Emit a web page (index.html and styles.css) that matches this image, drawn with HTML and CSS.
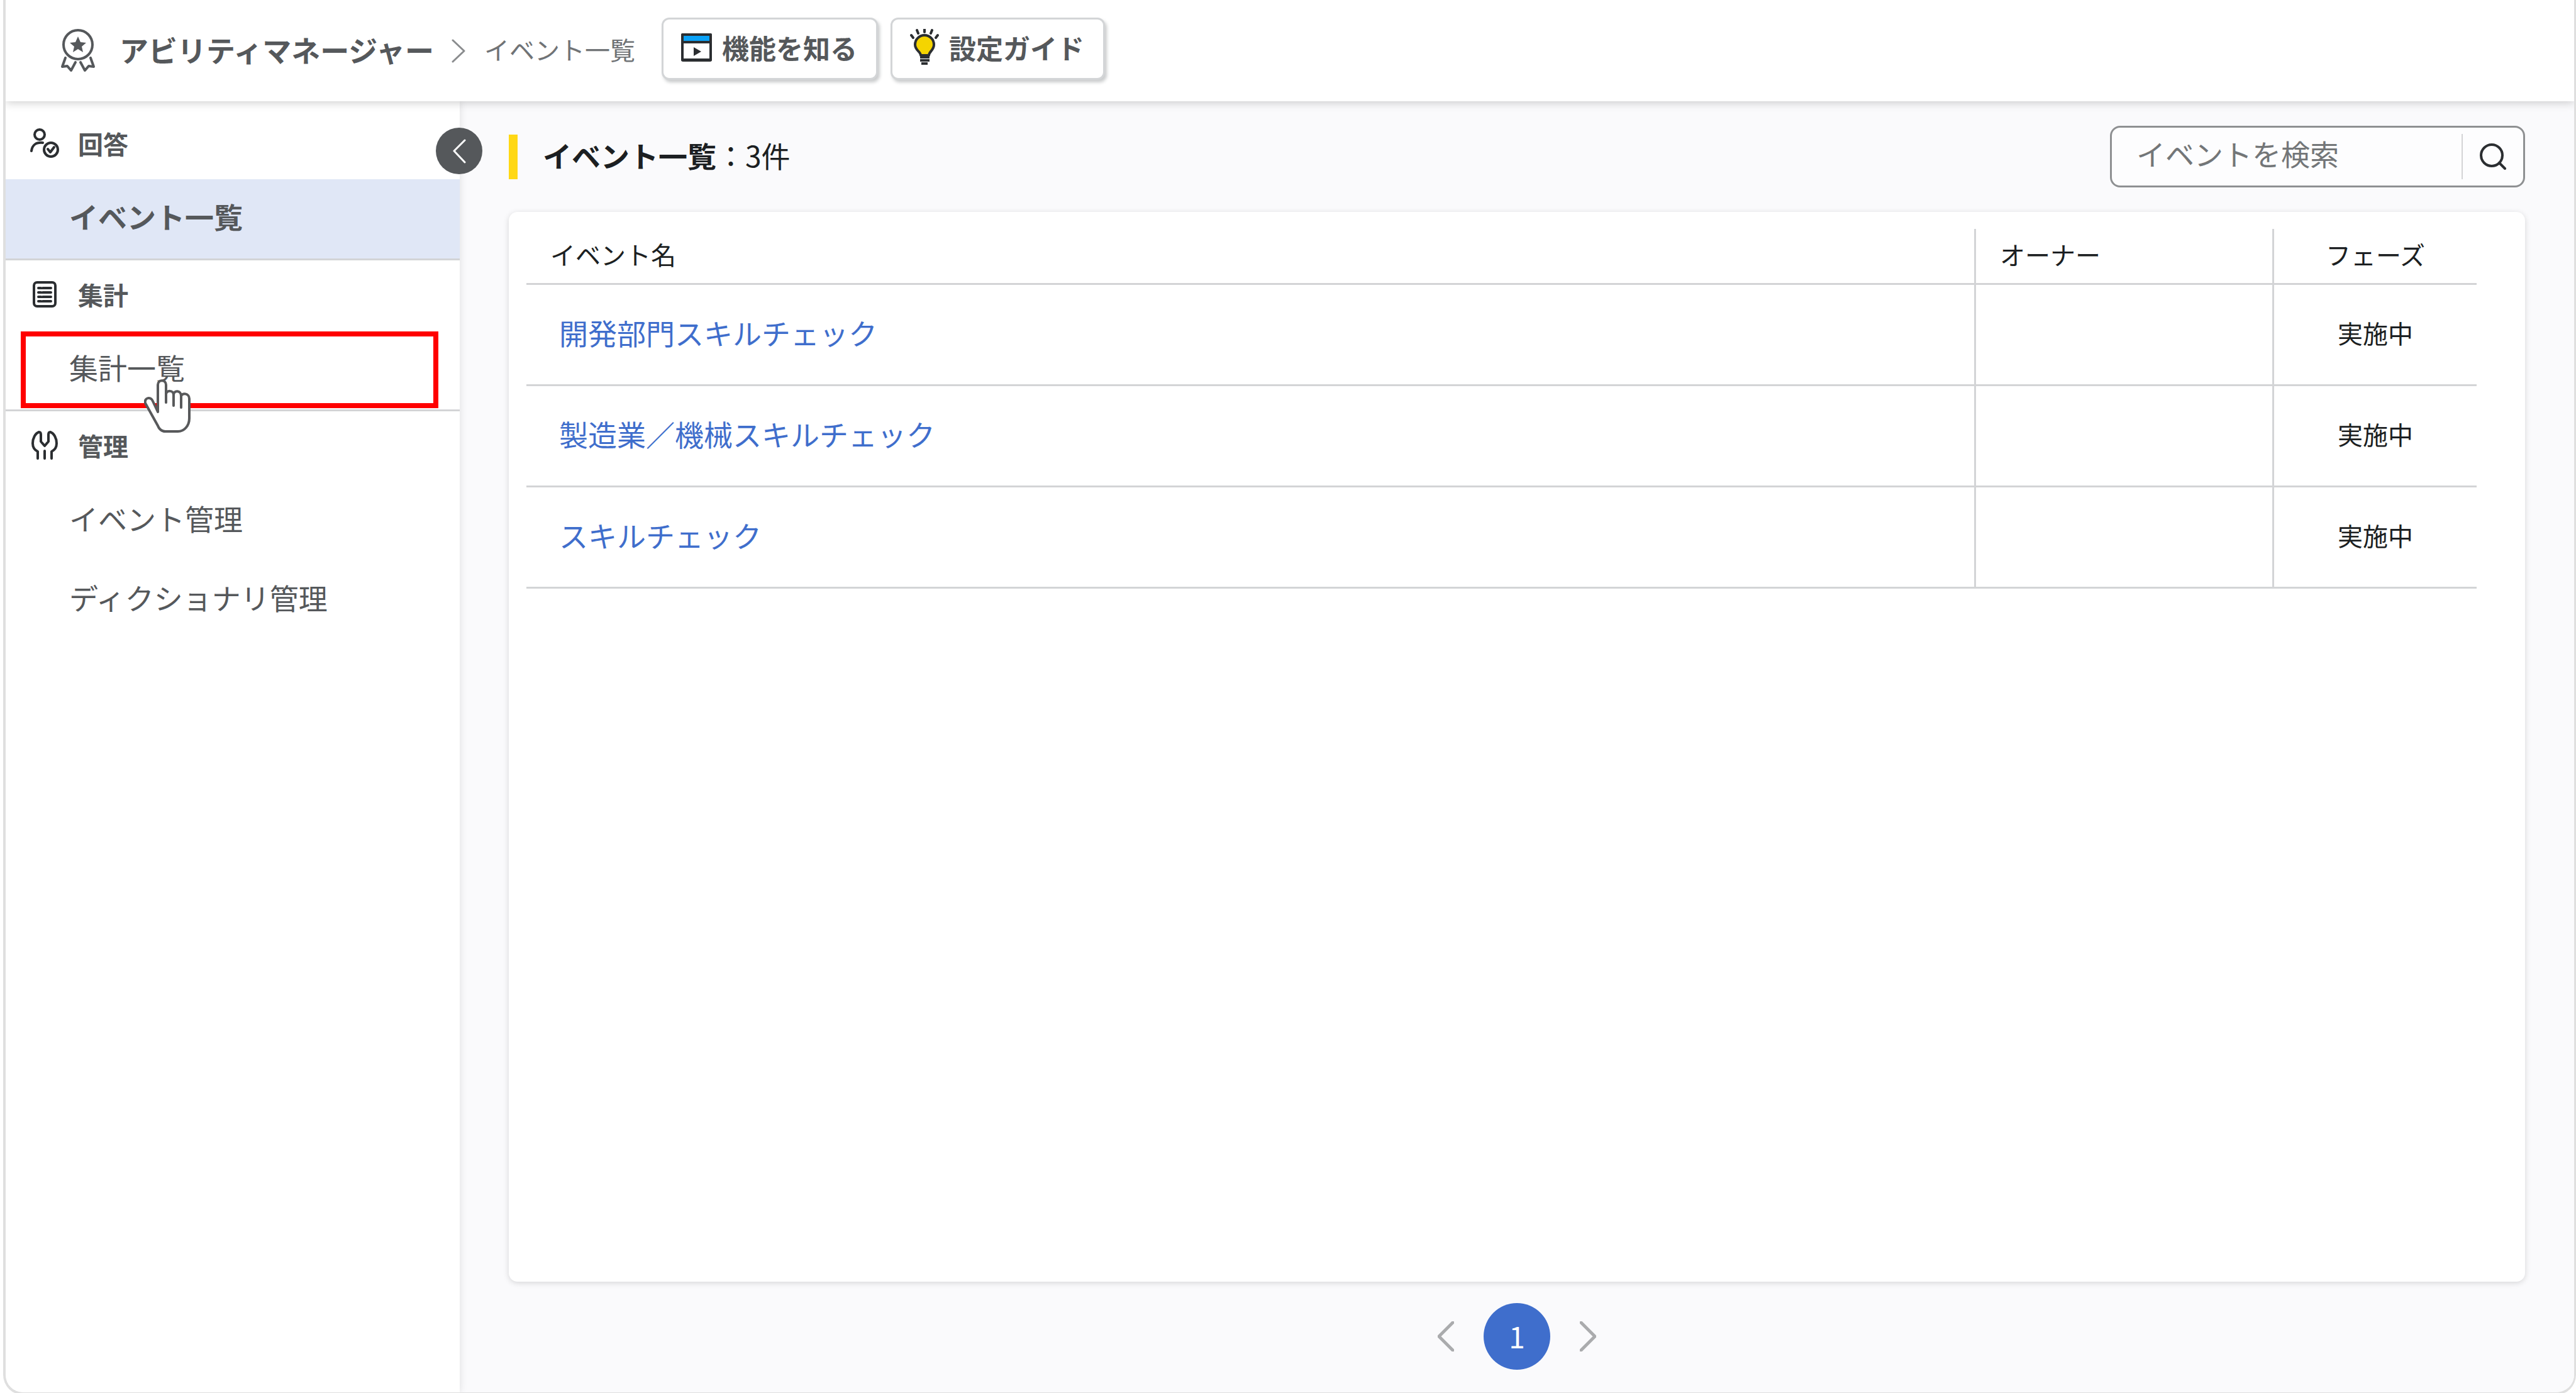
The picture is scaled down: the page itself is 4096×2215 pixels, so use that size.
FILE: index.html
```html
<!DOCTYPE html>
<html lang="ja">
<head>
    <meta charset="UTF-8">
    <meta name="viewport" content="width=device-width, initial-scale=1.0">
    <title>アビリティマネージャー</title>
    <link rel="stylesheet" href="styles.css">
</head>
<body>
    <div class="frame">
        <header class="topbar">
            <svg class="logo" viewBox="0 0 56 69" aria-hidden="true">
                <circle cx="28" cy="25" r="23"/>
                <path d="M8 46 L3 60 L11 59 L17 66 L24 53 M48 46 L53 60 L45 59 L39 66 L32 53"/>
                <path class="star" d="M28 12 L32 21 L41 22 L34 28 L36 37 L28 32 L20 37 L22 28 L15 22 L24 21 Z"/>
            </svg>
            <h1 class="app-name">アビリティマネージャー</h1>
            <svg class="crumb-arrow" viewBox="0 0 22 38" aria-hidden="true"><path d="M2 2 L20 19 L2 36"/></svg>
            <span class="crumb">イベント一覧</span>
            <div class="top-actions">
                <button type="button" class="guide-btn">
                    <svg class="window-icon" viewBox="0 0 49 45" aria-hidden="true">
                        <rect x="2" y="2" width="45" height="41" rx="1" fill="#fff"/>
                        <rect x="2" y="2" width="45" height="12" fill="#0aa2f7"/>
                        <path d="M2 42 H47"/>
                        <path d="M20 22 L32 29 L20 36 Z" class="solid"/>
                    </svg>
                    機能を知る
                </button>
                <button type="button" class="guide-btn">
                    <svg class="bulb-icon" viewBox="0 0 46 58" aria-hidden="true">
                        <path d="M17 42 C17 36 8 34 8 25 A15 15 0 0 1 38 25 C38 34 30 36 30 42 Z" fill="#f5d400"/>
                        <path d="M23 0 V5 M11 2 L13 7 M35 2 L33 7 M2 10 L5 14 M44 10 L41 14"/>
                        <path class="base" d="M16 45 H31 M16 50 H31 M18 55 H28"/>
                    </svg>
                    設定ガイド
                </button>
            </div>
        </header>

        <div class="content">
            <nav class="sidebar">
                <button type="button" class="toggle" aria-label="メニューを閉じる">
                    <svg viewBox="0 0 74 74" aria-hidden="true"><path d="M46 20 L29 37 L46 55"/></svg>
                </button>

                <section class="group">
                    <h2 class="group-title">
                        <svg viewBox="0 0 46 47" aria-hidden="true">
                            <circle cx="15" cy="10" r="8"/>
                            <path d="M2 36 C3 27 9 22 20 23"/>
                            <circle cx="33" cy="34" r="11"/>
                            <path d="M28 33 L32 38 L38 30"/>
                        </svg>
                        回答
                    </h2>
                    <a href="#" class="item active">イベント一覧</a>
                </section>

                <section class="group">
                    <h2 class="group-title">
                        <svg viewBox="0 0 46 47" aria-hidden="true">
                            <rect x="6" y="5" width="34" height="38" rx="5"/>
                            <path d="M13 14 H17 M20 14 H33 M13 21 H17 M20 21 H33 M13 28 H17 M20 28 H33 M13 35 H17 M20 35 H33"/>
                        </svg>
                        集計
                    </h2>
                    <a href="#" class="item marked">集計一覧</a>
                    <svg class="hand" viewBox="0 0 74 85" aria-hidden="true">
                        <path d="M22 52 V9 C22 0 35 0 35 9 V24 C35 17 47 17 47 25 C47 17 59 17 59 27 C60 21 72 22 72 31 V62 C72 74 64 83 54 83 H34 C28 83 24 79 22 74 L2 38 C0 29 11 27 14 35 Z"/>
                        <path d="M35 24 V37 M47 25 V42 M59 27 V45"/>
                    </svg>
                </section>

                <section class="group">
                    <h2 class="group-title">
                        <svg viewBox="0 0 46 47" aria-hidden="true">
                            <path d="M12 45 V34 C6 31 4 26 4 21 C4 13 8 5 14 3 Q17 3 17 7 V18 L23 25 L29 18 V7 Q29 3 32 3 C38 5 42 13 42 21 C42 26 40 31 34 34 V45 M23 33 V45"/>
                        </svg>
                        管理
                    </h2>
                    <a href="#" class="item">イベント管理</a>
                    <a href="#" class="item">ディクショナリ管理</a>
                </section>
            </nav>

            <main class="main">
                <div class="main-head">
                    <h2 class="page-title">イベント一覧<span>：3件</span></h2>
                    <form class="search">
                        <input type="text" placeholder="イベントを検索" aria-label="イベントを検索">
                        <button type="button" aria-label="検索">
                            <svg viewBox="0 0 42 42" aria-hidden="true"><circle cx="19" cy="19" r="17"/><path d="M31 31 L40 40"/></svg>
                        </button>
                    </form>
                </div>

                <div class="card">
                    <table class="events">
                        <thead>
                            <tr>
                                <th>イベント名</th>
                                <th class="owner">オーナー</th>
                                <th class="phase">フェーズ</th>
                            </tr>
                        </thead>
                        <tbody>
                            <tr>
                                <td><a href="#">開発部門スキルチェック</a></td>
                                <td></td>
                                <td class="phase">実施中</td>
                            </tr>
                            <tr>
                                <td><a href="#">製造業／機械スキルチェック</a></td>
                                <td></td>
                                <td class="phase">実施中</td>
                            </tr>
                            <tr>
                                <td><a href="#">スキルチェック</a></td>
                                <td></td>
                                <td class="phase">実施中</td>
                            </tr>
                        </tbody>
                    </table>
                </div>

                <div class="pager">
                    <button type="button" class="arrow" aria-label="前へ">
                        <svg viewBox="0 0 26 48" aria-hidden="true"><path d="M24 2 L2 24 L24 46"/></svg>
                    </button>
                    <button type="button" class="page">1</button>
                    <button type="button" class="arrow" aria-label="次へ">
                        <svg viewBox="0 0 26 48" aria-hidden="true"><path d="M2 2 L24 24 L2 46"/></svg>
                    </button>
                </div>
            </main>
        </div>
    </div>
</body>
</html>
```
FILE: styles.css
```css
* {
    box-sizing: border-box;
}

body {
    margin: 0;
    overflow: hidden;
    background-color: #fff;
    color: #1c1f22;
    font-family: "Noto Sans CJK JP", sans-serif;
    font-size: 40px;
    line-height: 60px;
}

h1, h2 {
    margin: 0;
}

a {
    text-decoration: none;
}

button, input {
    font-family: inherit;
    margin: 0;
    padding: 0;
    border: none;
    background: none;
}

button {
    cursor: pointer;
}

svg {
    display: block;
    flex: none;
    fill: none;
    stroke-linecap: round;
    stroke-linejoin: round;
}

/* the bottom edge of the frame runs just under the window */
.frame {
    display: flex;
    flex-direction: column;
    height: calc(100vh + 3px);
    margin-left: 5px;
    border: 4px solid #dfdfdf;
    border-top: none;
    border-right-width: 3px;
    border-radius: 0 0 32px 32px;
    overflow: hidden;
}

/* Header */
.topbar {
    position: relative;
    z-index: 2;
    display: flex;
    align-items: center;
    height: 161px;
    padding-left: 87px;
    background-color: #fff;
    box-shadow: 0 2px 14px rgba(0, 0, 0, 0.2);
    color: #55585b;
}

.logo {
    width: 56px;
    height: 69px;
    margin-right: 38px;
    stroke: #55585b;
    stroke-width: 4;
}

.logo .star {
    fill: #55585b;
    stroke: none;
}

.app-name {
    font-size: 46px;
    padding-bottom: 6px;
}

.crumb-arrow {
    width: 22px;
    height: 38px;
    margin: 0 30px 0 28px;
    stroke: #8a8c8e;
    stroke-width: 3;
}

.crumb {
    color: #707376;
    padding-bottom: 6px;
}

.top-actions {
    display: flex;
    gap: 20px;
    margin-left: 42px;
    padding-bottom: 7px;
}

.guide-btn {
    display: flex;
    align-items: center;
    height: 99px;
    padding: 0 30px 4px 28px;
    border: 3px solid #d3d5d7;
    border-radius: 12px;
    background-color: #fff;
    box-shadow: 3px 4px 5px rgba(80, 85, 90, 0.3);
    color: #55585b;
    font-size: 43px;
    font-weight: bold;
}

.guide-btn svg {
    stroke: #2b2e31;
    stroke-width: 4;
}

.window-icon {
    width: 49px;
    height: 45px;
    margin-right: 16px;
}

.window-icon .solid {
    fill: #2b2e31;
    stroke: none;
}

.bulb-icon {
    width: 46px;
    height: 58px;
    margin-right: 16px;
}

.bulb-icon .base {
    stroke-linecap: butt;
}

.content {
    flex: 1;
    display: flex;
    min-height: 0;
}

/* Sidebar */
.sidebar {
    position: relative;
    z-index: 1;
    flex: none;
    width: 722px;
    padding-top: 13px;
    background-color: #fff;
    box-shadow: 0 0 12px rgba(0, 0, 0, 0.12);
    color: #55585b;
}

.toggle {
    position: absolute;
    top: 42px;
    right: -36px;
    width: 74px;
    height: 74px;
    border-radius: 50%;
    background-color: #55585b;
}

.toggle svg {
    stroke: #fff;
    stroke-width: 3;
}

.group {
    position: relative;
    border-bottom: 3px solid #d3d4d6;
}

.group:last-child {
    border-bottom: none;
}

.group-title {
    display: flex;
    align-items: center;
    gap: 30px;
    height: 111px;
    padding: 0 0 4px 39px;
    font-size: 40px;
}

.group-title svg {
    width: 46px;
    height: 47px;
    stroke: #2b2e31;
    stroke-width: 4;
}

.item {
    display: flex;
    align-items: center;
    height: 126px;
    padding: 0 0 10px 101px;
    color: #55585b;
    font-size: 46px;
}

.item.active {
    background-color: #e0e7f6;
    font-weight: bold;
}

.item.marked {
    height: 122px;
    margin: 2px 34px 2px 24px;
    padding-left: 69px;
    border: 8px solid #ff0000;
}

.hand {
    position: absolute;
    top: 189px;
    left: 220px;
    width: 74px;
    height: 85px;
    z-index: 1;
    fill: #fff;
    stroke: #58595b;
    stroke-width: 4;
}

/* Event list */
.main {
    flex: 1;
    display: flex;
    flex-direction: column;
    min-width: 0;
    padding: 39px 78px 36px;
    background-color: #fafafc;
}

.main-head {
    display: flex;
    justify-content: space-between;
    align-items: center;
    margin-bottom: 39px;
}

.page-title {
    height: 71px;
    padding-left: 40px;
    border-left: 14px solid #ffd814;
    font-size: 46px;
    line-height: 64px;
}

.page-title span {
    font-weight: normal;
}

.search {
    display: flex;
    align-items: center;
    width: 660px;
    height: 98px;
    border: 3px solid #8e9092;
    border-radius: 16px;
    background-color: #fdfdfe;
}

.search input {
    flex: 1;
    min-width: 0;
    padding: 0 0 12px 39px;
    font-size: 46px;
    line-height: 66px;
    outline: none;
}

.search input::placeholder {
    color: #737678;
    opacity: 1;
}

.search button {
    display: flex;
    align-items: center;
    justify-content: center;
    width: 98px;
    height: 72px;
    border-left: 2px solid #d3d4d6;
}

.search svg {
    width: 42px;
    height: 42px;
    stroke: #2b2e31;
    stroke-width: 4;
}

.card {
    flex: 1;
    padding: 27px 77px 27px 28px;
    border-radius: 14px;
    background-color: #fff;
    box-shadow: 0 2px 10px rgba(0, 0, 0, 0.15);
}

.events {
    width: 100%;
    table-layout: fixed;
    border-spacing: 0;
}

.events th, .events td {
    padding: 0 0 6px 38px;
    border-bottom: 3px solid #d3d4d6;
    font-weight: normal;
    text-align: left;
}

.events th {
    height: 89px;
}

.events td {
    height: 161px;
}

.events th + th, .events td + td {
    border-left: 3px solid #d3d4d6;
}

.events td:first-child {
    padding-left: 52px;
}

.events .owner {
    width: 474px;
}

.events th.phase {
    width: 325px;
}

.events .phase {
    padding-left: 0;
    text-align: center;
}

.events a {
    color: #3f6ecc;
    font-size: 46px;
}

.pager {
    display: flex;
    justify-content: center;
    align-items: center;
    gap: 47px;
    margin-top: 34px;
}

.pager .arrow svg {
    width: 26px;
    height: 48px;
    stroke: #aaabad;
    stroke-width: 5;
}

.pager .page {
    width: 106px;
    height: 106px;
    padding-bottom: 2px;
    border-radius: 50%;
    background-color: #3f6ecc;
    color: #fff;
    font-size: 46px;
}
```
